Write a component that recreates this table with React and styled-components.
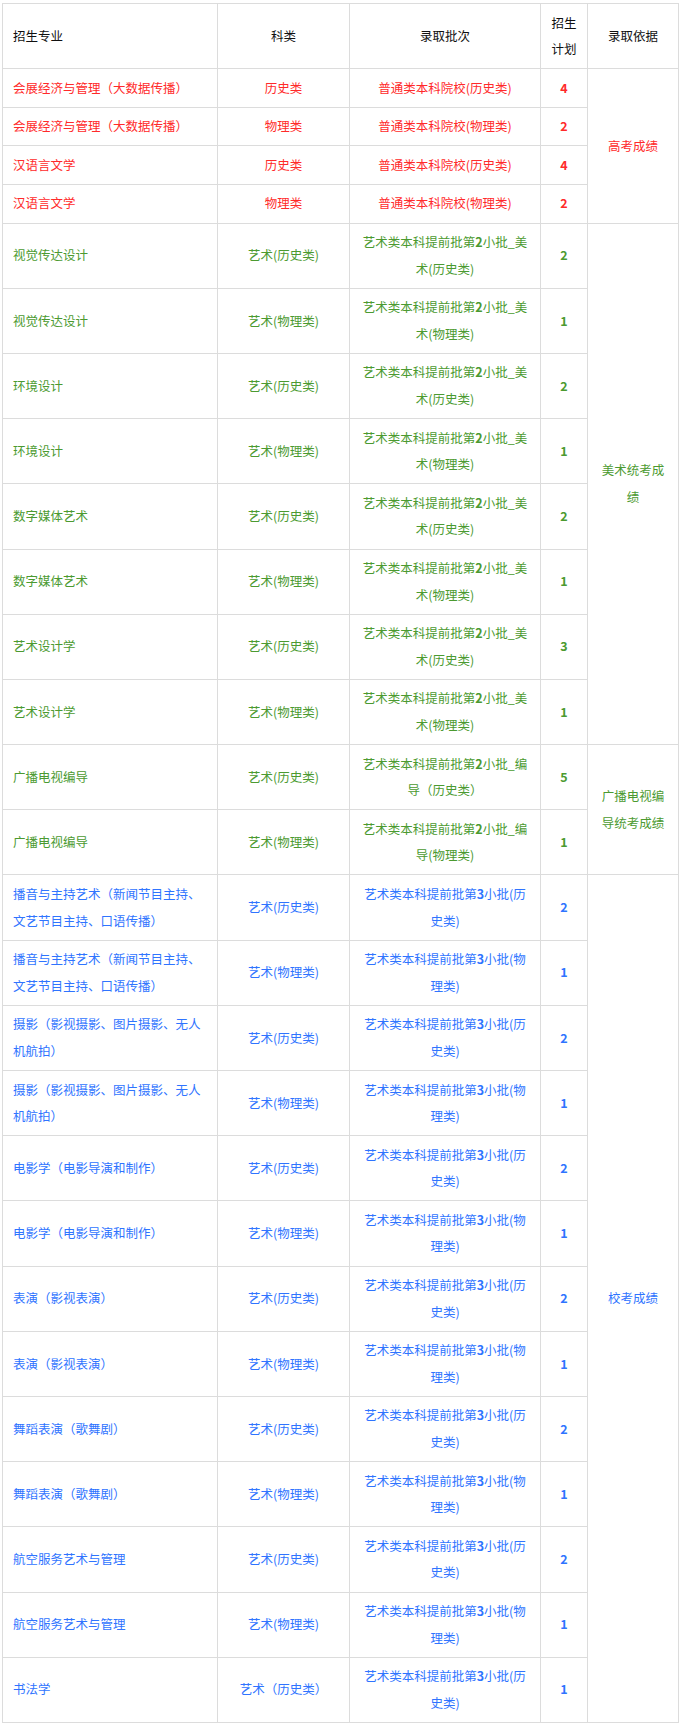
import React from "react";
import styled, { createGlobalStyle } from "styled-components";

const GlobalStyle = createGlobalStyle`
  html, body {
    margin: 0;
    padding: 0;
    background: #fff;
  }
  body {
    font-family: "Noto Sans CJK SC", "Liberation Sans", sans-serif;
  }
`;

const COLORS = {
  red: "#ff2a2a",
  green: "#4b9a30",
  blue: "#2f74ff",
};

const Page = styled.div`
  padding: 3px 0 0 2px;
`;

const Table = styled.table`
  width: 676px;
  table-layout: fixed;
  border-collapse: collapse;
  font-size: 12.5px;
  line-height: 26.6px;
`;

const HeadCell = styled.th`
  border: 1px solid #dcdcdc;
  padding: 5.5px 10px;
  font-weight: normal;
  color: #111;
  text-align: ${(p) => (p.$left ? "left" : "center")};
  vertical-align: middle;
`;

const Cell = styled.td`
  border: 1px solid #dcdcdc;
  padding: 5.5px 10px;
  color: ${(p) => COLORS[p.$tone]};
  text-align: ${(p) => (p.$left ? "left" : "center")};
  vertical-align: middle;
  font-weight: ${(p) => (p.$bold ? "bold" : "normal")};
`;

const Digit = styled.b`
  font-weight: bold;
`;

const withDigits = (text) =>
  text.split(/(\d)/).map((part, i) =>
    /\d/.test(part) ? <Digit key={i}>{part}</Digit> : part
  );

const groups = [
  {
    tone: "red",
    basis: "高考成绩",
    rows: [
      ["会展经济与管理（大数据传播）", "历史类", "普通类本科院校(历史类)", "4"],
      ["会展经济与管理（大数据传播）", "物理类", "普通类本科院校(物理类)", "2"],
      ["汉语言文学", "历史类", "普通类本科院校(历史类)", "4"],
      ["汉语言文学", "物理类", "普通类本科院校(物理类)", "2"],
    ],
  },
  {
    tone: "green",
    basis: "美术统考成绩",
    rows: [
      ["视觉传达设计", "艺术(历史类)", "艺术类本科提前批第2小批_美术(历史类)", "2"],
      ["视觉传达设计", "艺术(物理类)", "艺术类本科提前批第2小批_美术(物理类)", "1"],
      ["环境设计", "艺术(历史类)", "艺术类本科提前批第2小批_美术(历史类)", "2"],
      ["环境设计", "艺术(物理类)", "艺术类本科提前批第2小批_美术(物理类)", "1"],
      ["数字媒体艺术", "艺术(历史类)", "艺术类本科提前批第2小批_美术(历史类)", "2"],
      ["数字媒体艺术", "艺术(物理类)", "艺术类本科提前批第2小批_美术(物理类)", "1"],
      ["艺术设计学", "艺术(历史类)", "艺术类本科提前批第2小批_美术(历史类)", "3"],
      ["艺术设计学", "艺术(物理类)", "艺术类本科提前批第2小批_美术(物理类)", "1"],
    ],
  },
  {
    tone: "green",
    basis: "广播电视编导统考成绩",
    rows: [
      ["广播电视编导", "艺术(历史类)", "艺术类本科提前批第2小批_编导（历史类）", "5"],
      ["广播电视编导", "艺术(物理类)", "艺术类本科提前批第2小批_编导(物理类)", "1"],
    ],
  },
  {
    tone: "blue",
    basis: "校考成绩",
    rows: [
      ["播音与主持艺术（新闻节目主持、文艺节目主持、口语传播）", "艺术(历史类)", "艺术类本科提前批第3小批(历史类)", "2"],
      ["播音与主持艺术（新闻节目主持、文艺节目主持、口语传播）", "艺术(物理类)", "艺术类本科提前批第3小批(物理类)", "1"],
      ["摄影（影视摄影、图片摄影、无人机航拍）", "艺术(历史类)", "艺术类本科提前批第3小批(历史类)", "2"],
      ["摄影（影视摄影、图片摄影、无人机航拍）", "艺术(物理类)", "艺术类本科提前批第3小批(物理类)", "1"],
      ["电影学（电影导演和制作）", "艺术(历史类)", "艺术类本科提前批第3小批(历史类)", "2"],
      ["电影学（电影导演和制作）", "艺术(物理类)", "艺术类本科提前批第3小批(物理类)", "1"],
      ["表演（影视表演）", "艺术(历史类)", "艺术类本科提前批第3小批(历史类)", "2"],
      ["表演（影视表演）", "艺术(物理类)", "艺术类本科提前批第3小批(物理类)", "1"],
      ["舞蹈表演（歌舞剧）", "艺术(历史类)", "艺术类本科提前批第3小批(历史类)", "2"],
      ["舞蹈表演（歌舞剧）", "艺术(物理类)", "艺术类本科提前批第3小批(物理类)", "1"],
      ["航空服务艺术与管理", "艺术(历史类)", "艺术类本科提前批第3小批(历史类)", "2"],
      ["航空服务艺术与管理", "艺术(物理类)", "艺术类本科提前批第3小批(物理类)", "1"],
      ["书法学", "艺术（历史类）", "艺术类本科提前批第3小批(历史类)", "1"],
    ],
  },
];

export default function App() {
  return (
    <Page>
      <GlobalStyle />
      <Table>
        <colgroup>
          <col style={{ width: 215 }} />
          <col style={{ width: 132 }} />
          <col style={{ width: 191 }} />
          <col style={{ width: 47 }} />
          <col style={{ width: 91 }} />
        </colgroup>
        <thead>
          <tr>
            <HeadCell $left>招生专业</HeadCell>
            <HeadCell>科类</HeadCell>
            <HeadCell>录取批次</HeadCell>
            <HeadCell>招生计划</HeadCell>
            <HeadCell>录取依据</HeadCell>
          </tr>
        </thead>
        <tbody>
          {groups.map((group, gi) =>
            group.rows.map(([major, kind, batch, plan], ri) => (
              <tr key={`${gi}-${ri}`}>
                <Cell $tone={group.tone} $left>
                  {major}
                </Cell>
                <Cell $tone={group.tone}>{kind}</Cell>
                <Cell $tone={group.tone}>{withDigits(batch)}</Cell>
                <Cell $tone={group.tone} $bold>
                  {plan}
                </Cell>
                {ri === 0 && (
                  <Cell $tone={group.tone} rowSpan={group.rows.length}>
                    {group.basis}
                  </Cell>
                )}
              </tr>
            ))
          )}
        </tbody>
      </Table>
    </Page>
  );
}
